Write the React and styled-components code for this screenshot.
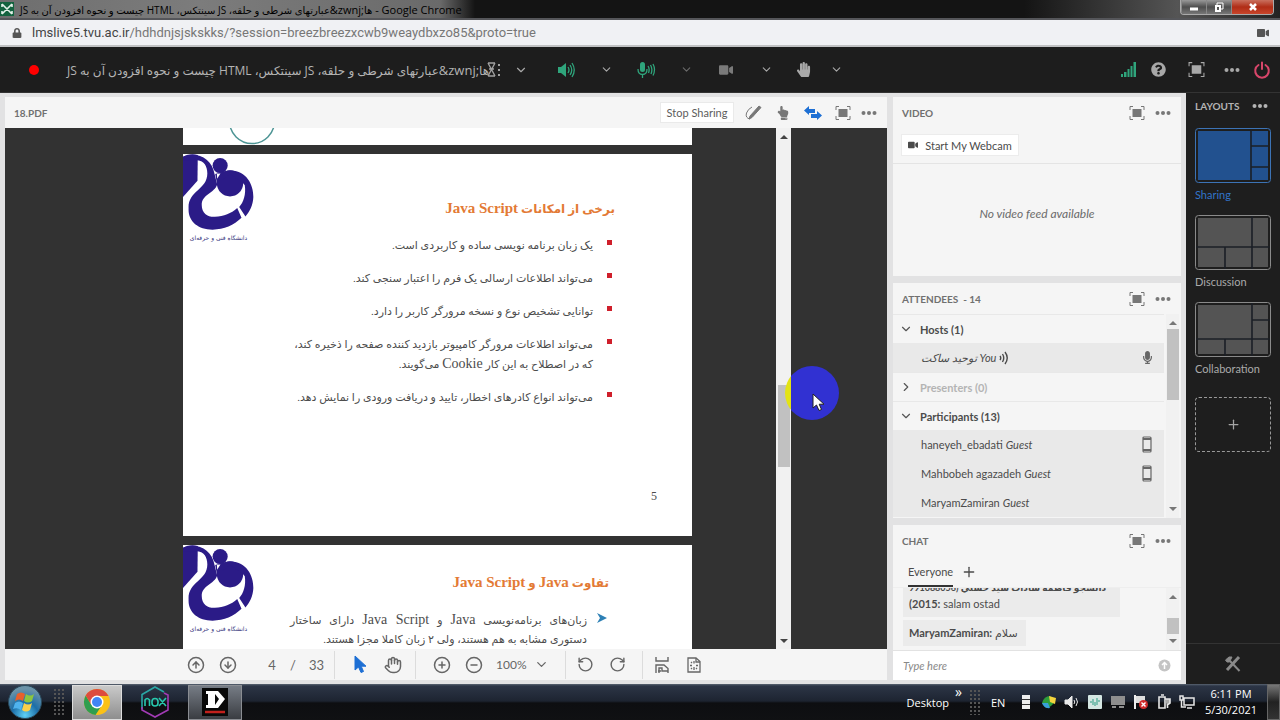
import React from 'react'
import styled, { createGlobalStyle, css } from 'styled-components'
import { FaVideo, FaHandPaper, FaHandPointUp, FaQuestionCircle, FaLock, FaMicrophone } from 'react-icons/fa'
import { LuChevronDown, LuChevronRight, LuHand, LuPlus, LuCirclePlus, LuCircleMinus, LuCircleArrowUp, LuCircleArrowDown, LuRotateCcw, LuRotateCw } from 'react-icons/lu'

const attendees = [
    { name: 'haneyeh_ebadati', phone: true },
    { name: 'Mahbobeh agazadeh', phone: true },
    { name: 'MaryamZamiran', phone: false },
]

const layouts = [
    { name: 'Sharing', active: true, lines: 'M56 1V54M56 18H75M56 39H75' },
    { name: 'Discussion', lines: 'M57 1V54M1 32H75M30 32V54' },
    { name: 'Collaboration', lines: 'M57 1V54M57 18H75M1 37H75M30 37V54' },
]

const SessionName = () => (
    <>
        <bdi dir="rtl">عبارتهای شرطی و حلقه، JS سینتکس، HTML چیست و نحوه افزودن آن به JS</bdi>
        &amp;zwnj;<bdi>ها</bdi>
    </>
)

const ScreenIcon = ({ size = 16 }) => (
    <svg width={size} height={size} viewBox="0 0 16 16" fill="none" stroke="currentColor">
        <path d="M4 1.5H1V5M12 1.5H15V5M4 14.5H1V11M12 14.5H15V11" />
        <rect x="3.5" y="4" width="9" height="8" fill="currentColor" stroke="none" />
    </svg>
)

const DotsIcon = () => (
    <svg width="16" height="6" viewBox="0 0 16 6" fill="currentColor">
        <circle cx="2.5" cy="3" r="2" />
        <circle cx="8" cy="3" r="2" />
        <circle cx="13.5" cy="3" r="2" />
    </svg>
)

const SpeakerIcon = ({ size = 18 }) => (
    <svg width={size} height={size} viewBox="0 0 18 18" fill="none" stroke="currentColor" strokeWidth="1.3">
        <path d="M1 6H4L9 2V16L4 12H1Z" fill="currentColor" stroke="none" />
        <path d="M11 6Q13 9 11 12M13 4Q16.5 9 13 14M15 2Q19.5 9 15 16" />
    </svg>
)

const MicWavesIcon = () => (
    <svg width="20" height="18" viewBox="0 0 20 18" fill="none" stroke="currentColor" strokeWidth="1.3">
        <rect x="4" y="1" width="5" height="10" rx="2.5" fill="currentColor" stroke="none" />
        <path d="M2 8Q2 13.5 6.5 13.5Q11 13.5 11 8M6.5 13V17M12 5Q14 8 12.5 12M14.5 4Q17 8 15 13M17 3Q20 8.5 17 14.5" />
    </svg>
)

const SignalIcon = () => (
    <svg width="17" height="17" viewBox="0 0 17 17" fill="currentColor">
        <path d="M1 13H3V16H1ZM4 11H6.5V16H4ZM7.5 8H9.5V16H7.5ZM10.5 5H12.5V16H10.5ZM13.5 1H16V16H13.5Z" />
    </svg>
)

const PowerIcon = () => (
    <svg width="18" height="18" viewBox="0 0 18 18" fill="none" stroke="currentColor" strokeWidth="2" strokeLinecap="round">
        <path d="M5.5 4A6.8 6.8 0 1 0 12.5 4M9 1.5V8" />
    </svg>
)

const GripIcon = () => (
    <svg width="18" height="18" viewBox="0 0 18 18" stroke="currentColor" fill="none">
        <path d="M1 2L8 15M8 2L1 15M1 2H8M2 8H7M1 15H8" strokeWidth="1.4" />
        <path d="M12 3V15" strokeWidth="2" strokeDasharray="2 3" />
    </svg>
)

const DrawIcon = () => (
    <svg width="17" height="17" viewBox="0 0 17 17" fill="none" stroke="currentColor">
        <path d="M5 12L14 2L16 3.5L7 13.5L4 15Z" fill="currentColor" />
        <path d="M5 15Q0 14 1.5 9Q3 5 7 3" />
    </svg>
)

const SyncIcon = () => (
    <svg width="18" height="14" viewBox="0 0 18 14" fill="currentColor">
        <path d="M0 4.5L5 0V3H11V7H5V9Z" />
        <path d="M18 9.5L13 5V8H7V12H13V14Z" />
    </svg>
)

const PointerIcon = ({ fill, stroke }) => (
    <svg width="14" height="19" viewBox="0 0 14 19" fill={fill} stroke={stroke}>
        <path d="M1 1V15L4.5 12L7 17.5L9.5 16.5L7.2 11.2H12Z" />
    </svg>
)

const FitWidthIcon = () => (
    <svg width="16" height="18" viewBox="0 0 16 18" fill="none" stroke="currentColor" strokeWidth="1.4">
        <path d="M2 1V5H14V1M2 17V9H10L14 12.5V17M5 17V12H8V15H14M4 15H7" />
    </svg>
)

const FitPageIcon = () => (
    <svg width="16" height="18" viewBox="0 0 16 18" fill="none" stroke="currentColor" strokeWidth="1.3">
        <path d="M2 2H10L14 5.5V16H2Z" />
        <path d="M10 2V6H14M8 5V7.5M8 11V14M4 9.5H6M10 9.5H12M5 6L6 7M5 13L6 12M11 13L10 12" />
    </svg>
)

const PhoneIcon = () => (
    <svg width="10" height="17" viewBox="0 0 10 17" fill="none" stroke="currentColor">
        <rect x="1" y="1" width="8" height="15" rx="1" strokeWidth="1.2" />
        <path d="M1 3H9M1 14H9" strokeWidth="1.8" />
    </svg>
)

const WavesIcon = () => (
    <svg width="10" height="14" viewBox="0 0 10 14" fill="none" stroke="currentColor" strokeWidth="1.4">
        <path d="M1 5Q2.5 7 1 9M3.5 3Q6 7 3.5 11M6 1Q10.5 7 6 13" />
    </svg>
)

const ToolsIcon = () => (
    <svg width="18" height="18" viewBox="0 0 18 18" fill="none" stroke="currentColor">
        <path d="M15 2L3 15" strokeWidth="3" />
        <path d="M6 6L15.5 16" strokeWidth="2" />
        <path d="M1.5 5L5 2H8L5.5 7L3 7Z" fill="currentColor" strokeWidth="1" />
    </svg>
)

const ArrowMark = ({ down }) => (
    <svg width="8" height="4" viewBox="0 0 8 4" fill="currentColor">
        <path d={down ? 'M0 0H8L4 4Z' : 'M0 4H8L4 0Z'} />
    </svg>
)

const UniversityLogo = () => (
    <svg width="71" height="77" viewBox="0 0 216 232" fill="#2b1b87">
        <path d="M0 7Q22 -4 45 2L44 80L0 130Z" />
        <path d="M0 7C40 -10 88 10 96 60L104 92C96 118 57 122 57 154C57 180 75 191 97 190C125 188 146 180 165 163L178 193C155 215 125 229 90 229C45 229 15 203 17 165C14 110 74 108 74 58C74 36 64 20 44 18L0 18Z" />
        <circle cx="113" cy="34" r="23" />
        <circle cx="143" cy="88" r="40" />
        <path d="M98 60Q118 52 140 49C190 45 215 90 214 130C213 155 203 174 190 189L171 160C184 146 192 122 188 94L183 88L143 60L104 92Z" />
        <path d="M103 59L114 58L104 74Z" fill="#fff" />
    </svg>
)

const ChromeLogo = () => (
    <svg width="28" height="28" viewBox="0 0 28 28">
        <circle cx="14" cy="14" r="13" fill="#fbc116" />
        <path d="M14 14L8.5 17L2.7 7.5A13 13 0 0 0 12.5 27L19 17Z" fill="#2f9e4f" />
        <path d="M14 8H25.5A13 13 0 0 0 2.7 7.5L8.5 17Z" fill="#dd4b3e" />
        <circle cx="14" cy="14" r="6.5" fill="#fff" />
        <circle cx="14" cy="14" r="5" fill="#4285f4" />
    </svg>
)

const WindowsOrb = () => (
    <svg width="36" height="34" viewBox="0 0 36 34">
        <defs>
            <radialGradient id="orb" cx="50%" cy="90%" r="80%">
                <stop offset="0" stopColor="#5fd0f5" />
                <stop offset="0.5" stopColor="#1c6ea8" />
                <stop offset="1" stopColor="#6c93a8" />
            </radialGradient>
        </defs>
        <circle cx="18" cy="17" r="16.5" fill="url(#orb)" stroke="#2a4a5c" />
        <path d="M10 9Q14 6 18 9L16 16Q12 13 8 16Z" fill="#e8602c" />
        <path d="M19 9Q23 12 27 9L25 16Q21 19 17 16Z" fill="#8cc63f" />
        <path d="M8 18Q12 15 16 18L14 25Q10 22 6 24Z" fill="#4fb3ee" />
        <path d="M17 18Q21 21 25 18L23 25Q19 28 15 25Z" fill="#fbd04a" />
    </svg>
)

const NoxLogo = () => (
    <svg width="30" height="32" viewBox="0 0 30 32" fill="none" strokeWidth="1.6">
        <path d="M24 6L15 1L2 8.5V23" stroke="#2aa7a5" />
        <path d="M2 21V24L15 31L28 24V9L24 7" stroke="#a23bb5" />
        <path d="M5 20V14Q7 11 9.5 14V20M12 15.5A3 3 0 0 1 18 15.5V17A3 3 0 0 1 12 17ZM19 12L26 20M26 12L19 20" stroke="#28c8ae" />
    </svg>
)

const DLogo = () => (
    <svg width="26" height="28" viewBox="0 0 26 28">
        <rect width="26" height="28" fill="#090909" />
        <path d="M4 3H16L23 11L16 20H4V17H6V6H4ZM13 6V17L17 11Z" fill="#fff" fillRule="evenodd" />
        <path d="M3 24H23" stroke="#c2201c" strokeWidth="2.5" />
    </svg>
)

const TrayIcons = () => (
    <Tray>
        <svg viewBox="0 0 16 16"><path d="M4 1H12V5H4ZM4 6H12V10H4ZM4 11H12V15H4Z" fill="#eee" /><path d="M4 5.5H12M4 10.5H12" stroke="#333" /></svg>
        <svg viewBox="0 0 16 16"><path d="M1 9Q3 2 9 2L14 7Q10 14 5 14Z" fill="#2e9d3a" /><path d="M8 2L15 4L14 10L9 8Z" fill="#f3d33d" /><path d="M1 9L7 9L9 14Q3 15 1 9Z" fill="#38a0d8" /></svg>
        <svg viewBox="0 0 16 16" fill="none" stroke="#e8e8e8"><path d="M1 6H4L8 2V14L4 10H1Z" fill="#e8e8e8" /><path d="M10 6Q11.5 8 10 10M12 4Q15 8 12 12" /></svg>
        <svg viewBox="0 0 16 16"><rect x="1" y="1" width="14" height="14" rx="1" fill="#d4e6e2" /><path d="M4 9V7M6 11V5M8 12V8M10 11V4M12 8V6" stroke="#2b9b82" /></svg>
        <svg viewBox="0 0 16 16"><path d="M1 2H15V11H1Z" fill="#8e8e8e" /><path d="M2 13H6M9 13H14" stroke="#8e8e8e" strokeWidth="2" /></svg>
        <svg viewBox="0 0 16 16"><path d="M2 1V15" stroke="#eee" strokeWidth="2" /><path d="M3 2H12V9H3Z" fill="#ddd" /><circle cx="10.5" cy="10.5" r="4.5" fill="#cf2b2b" /><path d="M8.5 8.5L12.5 12.5M12.5 8.5L8.5 12.5" stroke="#fff" strokeWidth="1.4" /></svg>
        <svg viewBox="0 0 16 16" fill="none" stroke="#e6e6e6" strokeWidth="1.6"><path d="M3 3H9V14H3ZM5 1H8" /><path d="M9 5H14V9L11.5 11V14" fill="#aaa" /></svg>
        <svg viewBox="0 0 16 16" fill="none" stroke="#e6e6e6" strokeWidth="1.5"><path d="M5 4H15V11H5ZM1 2H4V6H1ZM2.5 6V13H7M8 14H13" /></svg>
    </Tray>
)

const PodHeader = ({ title, children }) => (
    <Head>
        <PodTitle>{title}</PodTitle>
        {children}
        <IconButton aria-label="Full screen"><ScreenIcon /></IconButton>
        <IconButton aria-label="More options"><DotsIcon /></IconButton>
    </Head>
)

const App = () => (
    <Page>
        <GlobalStyle />
        <TitleBar>
            <Favicon viewBox="0 0 14 14">
                <rect width="14" height="14" fill="#14633f" />
                <path d="M2 2L12 12M12 2L2 12M2 2V5M12 2V5M2 9V12M12 9V12" stroke="#e4f2ea" strokeWidth="1.6" />
            </Favicon>
            <WindowTitle><SessionName /> - Google Chrome</WindowTitle>
            <WindowButtons>
                <WindowButton aria-label="Minimize"><svg width="10" height="10"><path d="M1 7H9" stroke="#fff" strokeWidth="3" /></svg></WindowButton>
                <WindowButton aria-label="Restore"><svg width="10" height="10" fill="none" stroke="#fff"><path d="M3 3V1H9V7H7" /><path d="M2 4H6V9H2Z" strokeWidth="2" /></svg></WindowButton>
                <WindowButton aria-label="Close" $close><svg width="10" height="10"><path d="M2 2L8 8M8 2L2 8" stroke="#fff" strokeWidth="2.5" /></svg></WindowButton>
            </WindowButtons>
        </TitleBar>
        <AddressBar>
            <FaLock size={10} />
            <Url><span>lmslive5.tvu.ac.ir</span>/hdhdnjsjskskks/?session=breezbreezxcwb9weaydbxzo85&amp;proto=true</Url>
            <FaVideo size={12} />
        </AddressBar>
        <MeetingBar>
            <RecordDot />
            <MeetingTitle><SessionName /></MeetingTitle>
            <GripIcon />
            <BarButton $width={32} aria-label="Meeting menu"><LuChevronDown size={14} /></BarButton>
            <Controls>
                <BarButton $color="#2fa57c" aria-label="Speaker"><SpeakerIcon /></BarButton>
                <BarButton aria-label="Speaker options"><LuChevronDown size={13} /></BarButton>
                <BarButton $color="#2fa57c" aria-label="Microphone"><MicWavesIcon /></BarButton>
                <BarButton $color="#6a6a6a" aria-label="Microphone options"><LuChevronDown size={13} /></BarButton>
                <BarButton $color="#7a7a7a" aria-label="Camera"><FaVideo size={14} /></BarButton>
                <BarButton aria-label="Camera options"><LuChevronDown size={13} /></BarButton>
                <BarButton $width={34} aria-label="Raise hand"><FaHandPaper size={15} /></BarButton>
                <BarButton $width={32} aria-label="Status options"><LuChevronDown size={13} /></BarButton>
            </Controls>
            <BarButton $width={32} $color="#2fa57c" aria-label="Connection"><SignalIcon /></BarButton>
            <BarButton $width={28} aria-label="Help"><FaQuestionCircle size={15} /></BarButton>
            <BarButton $width={48} aria-label="Full screen"><ScreenIcon size={17} /></BarButton>
            <BarButton $width={24} aria-label="More"><DotsIcon /></BarButton>
            <BarButton $width={36} $color="#d8466a" aria-label="End meeting"><PowerIcon /></BarButton>
        </MeetingBar>
        <Body>
            <Pods>
                <SharePod>
                    <PodHeader title="18.PDF">
                        <StopButton>Stop Sharing</StopButton>
                        <ShareTools>
                            <IconButton aria-label="Draw"><DrawIcon /></IconButton>
                            <IconButton aria-label="Pointer"><FaHandPointUp size={14} /></IconButton>
                            <IconButton $active aria-label="Sync"><SyncIcon /></IconButton>
                        </ShareTools>
                    </PodHeader>
                    <Viewer>
                        <Slides>
                            <Slide $height={17}>
                                <Arc viewBox="0 0 48 17"><circle cx="24" cy="-7" r="22.5" fill="none" stroke="#4e9595" strokeWidth="1.5" /></Arc>
                            </Slide>
                            <Slide $height={382}>
                                <LogoBox><UniversityLogo /><LogoText>دانشگاه فنی و حرفه‌ای</LogoText></LogoBox>
                                <SlideBody>
                                    <SlideHeading>برخی از امکانات <Latin $large>Java Script</Latin></SlideHeading>
                                    <Bullets>
                                        <li>یک زبان برنامه نویسی ساده و کاربردی است.</li>
                                        <li>می‌تواند اطلاعات ارسالی یک فرم را اعتبار سنجی کند.</li>
                                        <li>توانایی تشخیص نوع و نسخه مرورگر کاربر را دارد.</li>
                                        <li>می‌تواند اطلاعات مرورگر کامپیوتر بازدید کننده صفحه را ذخیره کند،<br />که در اصطلاح به این کار <Latin>Cookie</Latin> می‌گویند.</li>
                                        <li>می‌تواند انواع کادرهای اخطار، تایید و دریافت ورودی را نمایش دهد.</li>
                                    </Bullets>
                                    <SlideNumber>5</SlideNumber>
                                </SlideBody>
                            </Slide>
                            <Slide>
                                <LogoBox><UniversityLogo /><LogoText>دانشگاه فنی و حرفه‌ای</LogoText></LogoBox>
                                <SlideBody $second>
                                    <SlideHeading>تفاوت <Latin $large>Java</Latin> و <Latin $large>Java Script</Latin></SlideHeading>
                                    <Bullets $arrow>
                                        <li>
                                            <svg width="12" height="12" viewBox="0 0 12 12"><path d="M1 1L11 6L1 11L4 6Z" fill="#2d80b5" /></svg>
                                            زبان‌های برنامه‌نویسی <Latin>Java</Latin> و <Latin>Java Script</Latin> دارای ساختار دستوری مشابه به هم هستند، ولی ۲ زبان کاملا مجزا هستند.
                                        </li>
                                    </Bullets>
                                </SlideBody>
                            </Slide>
                        </Slides>
                        <ViewerScroll>
                            <Halo $color="#e3e315" $left={9} />
                            <ArrowMark />
                            <ViewerThumb />
                            <ArrowMark down />
                        </ViewerScroll>
                        <Gutter>
                            <Halo $color="#3131d2" $left={-6} />
                            <Cursor><PointerIcon fill="#fff" stroke="#222" /></Cursor>
                        </Gutter>
                    </Viewer>
                    <DocBar>
                        <DocButton aria-label="Previous page"><LuCircleArrowUp size={18} /></DocButton>
                        <DocButton aria-label="Next page"><LuCircleArrowDown size={18} /></DocButton>
                        <PageInput aria-label="Page" defaultValue="4" />
                        <PageTotal><span>/</span><span>33</span></PageTotal>
                        <DocGroup>
                            <DocButton aria-label="Select"><PointerIcon fill="#1d6fd4" stroke="#1d6fd4" /></DocButton>
                            <DocButton aria-label="Pan"><LuHand size={18} /></DocButton>
                        </DocGroup>
                        <DocGroup>
                            <DocButton aria-label="Zoom in"><LuCirclePlus size={18} /></DocButton>
                            <DocButton aria-label="Zoom out"><LuCircleMinus size={18} /></DocButton>
                            <ZoomLabel>
                                <ZoomSelect aria-label="Zoom" defaultValue="100%"><option>100%</option><option>150%</option></ZoomSelect>
                                <LuChevronDown size={15} />
                            </ZoomLabel>
                        </DocGroup>
                        <DocGroup $tight>
                            <DocButton aria-label="Rotate left"><LuRotateCcw size={17} /></DocButton>
                            <DocButton aria-label="Rotate right"><LuRotateCw size={17} /></DocButton>
                        </DocGroup>
                        <DocGroup $tight>
                            <DocButton aria-label="Fit width"><FitWidthIcon /></DocButton>
                            <DocButton aria-label="Fit page"><FitPageIcon /></DocButton>
                        </DocGroup>
                    </DocBar>
                </SharePod>
                <SideColumn>
                    <Pod $height={179}>
                        <PodHeader title="VIDEO" />
                        <WebcamRow><WebcamButton><FaVideo size={10} />Start My Webcam</WebcamButton></WebcamRow>
                        <NoFeed>No video feed available</NoFeed>
                    </Pod>
                    <Pod $height={235}>
                        <PodHeader title="ATTENDEES &nbsp;- 14" />
                        <Scrollable>
                            <AttendeeList>
                                <GroupRow><LuChevronDown size={14} />Hosts (1)</GroupRow>
                                <Person><bdi><i>توحید ساکت</i></bdi><i>You</i><WavesIcon /><End><FaMicrophone size={13} /></End></Person>
                                <GroupRow $empty><LuChevronRight size={14} />Presenters (0)</GroupRow>
                                <GroupRow><LuChevronDown size={14} />Participants (13)</GroupRow>
                                {attendees.map(person => (
                                    <Person key={person.name}>
                                        {person.name}<i>Guest</i>
                                        {person.phone && <End><PhoneIcon /></End>}
                                    </Person>
                                ))}
                            </AttendeeList>
                            <PodScroll><ArrowMark /><PodThumb $height={71} /><ArrowMark down /></PodScroll>
                        </Scrollable>
                    </Pod>
                    <Pod $last>
                        <PodHeader title="CHAT" />
                        <Tabs><Tab>Everyone</Tab><AddTab aria-label="New chat"><LuPlus size={16} /></AddTab></Tabs>
                        <Scrollable>
                            <Messages>
                                <Message $wide><b><bdi dir="rtl">دانشجو فاطمه سادات سيد حسني (991088056</bdi><br />(2015:</b> salam ostad</Message>
                                <Message><b>MaryamZamiran:</b> سلام</Message>
                            </Messages>
                            <PodScroll><ArrowMark /><PodThumb $low $height={16} /><ArrowMark down /></PodScroll>
                        </Scrollable>
                        <ChatForm>
                            <ChatInput aria-label="Message" placeholder="Type here" />
                            <SendButton aria-label="Send">
                                <svg width="13" height="13" viewBox="0 0 13 13"><circle cx="6.5" cy="6.5" r="6" fill="#c4c4c4" /><path d="M6.5 10V4M4 6L6.5 3.5L9 6" stroke="#fff" fill="none" strokeWidth="1.5" /></svg>
                            </SendButton>
                        </ChatForm>
                    </Pod>
                </SideColumn>
            </Pods>
            <LayoutBar>
                <LayoutHead>LAYOUTS<DotsIcon /></LayoutHead>
                {layouts.map(item => (
                    <LayoutItem key={item.name} $active={item.active}>
                        <svg width="76" height="55" viewBox="0 0 76 55">
                            <rect x="0.5" y="0.5" width="75" height="54" rx="3" fill="#1e1e1e" stroke={item.active ? '#3c73b5' : '#8a8a8a'} />
                            <rect x="3" y="3" width="70" height="49" fill={item.active ? '#22518f' : '#545454'} />
                            <path d={item.lines} stroke="#1b1f26" strokeWidth="1.6" />
                        </svg>
                        {item.name}
                    </LayoutItem>
                ))}
                <AddLayout aria-label="Add layout"><LuPlus size={15} /></AddLayout>
                <LayoutFoot><ToolsIcon /></LayoutFoot>
            </LayoutBar>
        </Body>
        <Taskbar>
            <StartButton aria-label="Start"><WindowsOrb /></StartButton>
            <DotGrip />
            <TaskButton $tone="bright" aria-label="Chrome"><ChromeLogo /></TaskButton>
            <TaskButton aria-label="Nox"><NoxLogo /></TaskButton>
            <TaskButton $tone="dim" aria-label="D"><DLogo /></TaskButton>
            <DesktopLabel>Desktop</DesktopLabel>
            <More>»</More>
            <DotGrip $small />
            <Language>EN</Language>
            <TrayIcons />
            <Clock><span>6:11 PM</span><span>5/30/2021</span></Clock>
            <ShowDesktop aria-label="Show desktop" />
        </Taskbar>
    </Page>
)

export default App

const GlobalStyle = createGlobalStyle`
    * {
        box-sizing: border-box;
    }
    body {
        margin: 0;
        font-family: Lato, "DejaVu Sans", sans-serif;
        font-size: 11px;
        color: #4b4b4b;
    }
    button {
        font: inherit;
        color: inherit;
        background: none;
        border: 0;
        padding: 0;
    }
    svg {
        flex-shrink: 0;
        display: block;
    }
`
const center = css`
    display: flex;
    align-items: center;
    justify-content: center;
`
const Page = styled.div`
    display: flex;
    flex-direction: column;
    height: 100vh;
    min-height: 600px;
    overflow: hidden;
`
const TitleBar = styled.header`
    display: flex;
    align-items: center;
    height: 20px;
    flex-shrink: 0;
    background: linear-gradient(90deg, #6e6e6e 0, #7c7c7c 200px, #6a6a6a 440px, #141414 475px, #141414 80%, #555 92%, #222 100%);
    border-bottom: 2px solid #55565a;
`
const Favicon = styled.svg`
    width: 14px;
    height: 14px;
    margin-right: 6px;
`
const WindowTitle = styled.div`
    flex: 1;
    font-family: "Open Sans", "DejaVu Sans", sans-serif;
    font-size: 11px;
    color: #000;
    white-space: nowrap;
    bdi {
        font-size: 10px;
    }
`
const WindowButtons = styled.div`
    display: flex;
    align-self: flex-start;
    height: 15px;
    margin-right: 6px;
    border: 1px solid #aaa;
    border-top: 0;
    border-radius: 0 0 4px 4px;
    overflow: hidden;
`
const WindowButton = styled.button`
    ${center}
    width: ${props => props.$close ? '42px' : '25px'};
    background: ${props => props.$close ? 'linear-gradient(#c9705e, #b02d16 50%, #c8452b)' : 'linear-gradient(#999, #4d4d4d 50%, #777)'};
    border-left: 1px solid #888;
`
const AddressBar = styled.div`
    display: flex;
    align-items: center;
    height: 27px;
    flex-shrink: 0;
    padding: 0 11px 0 12px;
    background: #f0f1f4;
    border-bottom: 2px solid #c0c1c3;
    color: #555;
`
const Url = styled.div`
    flex: 1;
    padding-left: 10px;
    font-family: Roboto, sans-serif;
    font-size: 13px;
    color: #777;
    span {
        color: #444;
    }
`
const MeetingBar = styled.div`
    display: flex;
    align-items: center;
    height: 46px;
    flex-shrink: 0;
    background: #1d1d1d;
    border-bottom: 1px solid #333;
    color: #a0a0a0;
`
const RecordDot = styled.div`
    width: 10px;
    height: 10px;
    margin: 0 28px 0 29px;
    border-radius: 50%;
    background: #f00;
`
const MeetingTitle = styled.h1`
    width: 420px;
    margin: 0;
    font-family: "Open Sans", "DejaVu Sans", sans-serif;
    font-size: 13px;
    font-weight: 400;
    color: #b4b4b4;
    white-space: nowrap;
    bdi {
        font-size: 12px;
    }
`
const Controls = styled.div`
    display: flex;
    flex: 1;
    padding-left: 9px;
`
const BarButton = styled.button`
    ${center}
    width: ${props => props.$width || 40}px;
    color: ${props => props.$color || '#a8a8a8'};
`
const Body = styled.main`
    display: flex;
    flex: 1;
    min-height: 0;
`
const Pods = styled.div`
    display: flex;
    flex: 1;
    gap: 6px;
    min-width: 0;
    padding: 4px 5px;
    background: #e2e2e3;
`
const SharePod = styled.section`
    display: flex;
    flex: 1;
    flex-direction: column;
    min-width: 0;
    background: #f5f5f5;
`
const SideColumn = styled.div`
    display: flex;
    flex-direction: column;
    width: 288px;
    gap: 7px;
`
const Pod = styled.section`
    display: flex;
    flex-direction: column;
    ${props => props.$last ? 'flex: 1;' : `height: ${props.$height}px; flex-shrink: 0;`}
    min-height: 0;
    background: #f5f5f5;
`
const Head = styled.header`
    display: flex;
    align-items: center;
    height: 31px;
    flex-shrink: 0;
    padding: 0 5px 0 9px;
    color: #6e6e6e;
`
const PodTitle = styled.h2`
    flex: 1;
    margin: 0;
    font-size: 10px;
    font-weight: 700;
    color: #707070;
`
const IconButton = styled.button`
    ${center}
    width: 26px;
    height: 24px;
    color: ${props => props.$active ? '#1d6fd4' : '#777'};
`
const StopButton = styled.button`
    width: 74px;
    height: 21px;
    margin-right: 6px;
    background: #fff;
    border: 1px solid #eaeaea;
    color: #5c5c5c;
`
const ShareTools = styled.div`
    display: flex;
    gap: 4px;
    padding-right: 4px;
`
const Viewer = styled.div`
    display: flex;
    flex: 1;
    min-height: 0;
    background: #323232;
`
const Slides = styled.div`
    display: flex;
    flex: 1;
    flex-direction: column;
    gap: 9px;
    min-width: 0;
    padding: 0 84px 0 178px;
    overflow: hidden;
`
const Slide = styled.article`
    display: flex;
    ${props => props.$height ? `flex: 0 0 ${props.$height}px;` : 'flex: 1 1 0;'}
    min-height: 0;
    overflow: hidden;
    background: #fff;
`
const Arc = styled.svg`
    width: 48px;
    height: 17px;
    margin-left: 45px;
`
const LogoBox = styled.div`
    width: 71px;
    flex-shrink: 0;
`
const LogoText = styled.div`
    direction: rtl;
    text-align: center;
    font-family: "DejaVu Sans", sans-serif;
    font-size: 6px;
    line-height: 14px;
    white-space: nowrap;
    color: #35347c;
`
const SlideBody = styled.div`
    display: flex;
    flex: 1;
    flex-direction: column;
    direction: rtl;
    padding: ${props => props.$second ? '25px 83px 0 36px' : '42px 77px 32px 0'};
    font-family: "Liberation Serif", "DejaVu Sans", serif;
    font-size: 11px;
    color: #4c4c4c;
`
const SlideHeading = styled.h3`
    margin: 0 0 15px;
    font-size: 12px;
    line-height: 24px;
    color: #e37a35;
`
const Latin = styled.bdi`
    font-size: ${props => props.$large ? '15px' : '14px'};
`
const Bullets = styled.ul`
    display: flex;
    flex-direction: column;
    gap: 14px;
    margin: 0;
    padding: 0 22px 0 0;
    list-style: none;
    line-height: 19px;
    ${props => props.$arrow && 'text-align: justify;'}
    li {
        position: relative;
    }
    li::before {
        content: '';
        position: absolute;
        top: 4px;
        right: -19px;
        width: 5px;
        height: 5px;
        background: ${props => props.$arrow ? 'none' : '#cf1f2b'};
    }
    svg {
        position: absolute;
        top: 2px;
        right: -21px;
    }
`
const SlideNumber = styled.div`
    direction: ltr;
    margin: auto -44px 0 0;
    padding-right: 2px;
    text-align: right;
    font-size: 12px;
`
const ViewerScroll = styled.div`
    position: relative;
    display: flex;
    flex-direction: column;
    align-items: center;
    width: 15px;
    padding: 7px 0 6px;
    overflow: hidden;
    background: #f1f1f1;
    color: #444;
`
const ViewerThumb = styled.div`
    width: 12px;
    height: 82px;
    margin: 246px 0 auto;
    background: #c1c1c1;
`
const Gutter = styled.div`
    position: relative;
    width: 96px;
    overflow: hidden;
`
const Halo = styled.div`
    position: absolute;
    top: 238px;
    left: ${props => props.$left}px;
    width: 54px;
    height: 54px;
    border-radius: 50%;
    background: ${props => props.$color};
`
const Cursor = styled.div`
    position: absolute;
    top: 265px;
    left: 21px;
`
const DocBar = styled.div`
    display: flex;
    align-items: center;
    height: 31px;
    flex-shrink: 0;
    padding-left: 175px;
    color: #666;
    font-size: 13px;
`
const DocButton = styled.button`
    ${center}
    width: 32px;
    height: 28px;
`
const PageInput = styled.input`
    width: 24px;
    margin-left: 16px;
    padding: 0;
    border: 0;
    background: none;
    font: inherit;
    color: inherit;
    text-align: center;
`
const PageTotal = styled.div`
    display: flex;
    gap: 13px;
    width: 50px;
    padding-left: 6px;
`
const DocGroup = styled.div`
    display: flex;
    padding: ${props => props.$tight ? '0 9px 0 3px' : '0 6px 0 10px'};
    border-left: 1px solid #dcdcdc;
`
const ZoomLabel = styled.label`
    display: flex;
    align-items: center;
    padding: 0 10px 0 6px;
`
const ZoomSelect = styled.select`
    appearance: none;
    width: 38px;
    padding: 0;
    border: 0;
    background: none;
    font: inherit;
    font-size: 12px;
    color: inherit;
`
const WebcamRow = styled.div`
    height: 36px;
    padding: 6px 8px;
    border-bottom: 1px solid #e4e4e4;
`
const WebcamButton = styled.button`
    ${center}
    gap: 7px;
    width: 118px;
    height: 22px;
    background: #fff;
    border: 1px solid #ececec;
`
const NoFeed = styled.p`
    ${center}
    flex: 1;
    margin: 0;
    padding-bottom: 13px;
    font-size: 12px;
    font-style: italic;
    color: #6a6a6a;
`
const Scrollable = styled.div`
    display: flex;
    flex: 1;
    min-height: 0;
    padding-right: 2px;
`
const AttendeeList = styled.div`
    flex: 1;
    margin-right: 2px;
    overflow: hidden;
`
const GroupRow = styled.div`
    display: flex;
    align-items: center;
    gap: 7px;
    height: 29px;
    padding-left: 6px;
    border-top: 1px solid #e8e8e8;
    font-weight: 700;
    color: ${props => props.$empty ? '#b4b4b4' : '#4b4b4b'};
    svg {
        color: #555;
    }
`
const Person = styled.div`
    display: flex;
    align-items: center;
    gap: 3px;
    height: 29px;
    padding: 0 10px 0 28px;
    background: #e9e9e9;
`
const End = styled.span`
    ${center}
    width: 14px;
    margin-left: auto;
    color: #666;
`
const PodScroll = styled.div`
    display: flex;
    flex-direction: column;
    align-items: center;
    width: 13px;
    padding: 7px 0;
    background: #f1f1f1;
    color: #777;
`
const PodThumb = styled.div`
    width: 12px;
    height: ${props => props.$height}px;
    margin: ${props => props.$low ? 'auto 0 5px' : '4px 0 auto'};
    background: #c1c1c1;
`
const Tabs = styled.div`
    display: flex;
    align-items: flex-end;
    gap: 8px;
    height: 32px;
    padding: 0 15px;
    border-bottom: 1px solid #eee;
`
const Tab = styled.button`
    height: 30px;
    border-bottom: 2px solid #333;
`
const AddTab = styled.button`
    height: 31px;
`
const Messages = styled.div`
    display: flex;
    flex: 1;
    flex-direction: column;
    align-items: flex-start;
    justify-content: flex-end;
    gap: 3px;
    padding: 0 0 4px 10px;
    overflow: hidden;
`
const Message = styled.div`
    width: ${props => props.$wide ? '217px' : 'auto'};
    flex-shrink: 0;
    padding: 5px 8px 5px 6px;
    background: #ebebeb;
    line-height: 16px;
    white-space: nowrap;
    bdi {
        font-size: 9px;
    }
`
const ChatForm = styled.form`
    display: flex;
    align-items: center;
    height: 30px;
    flex-shrink: 0;
    padding: 0 10px;
    background: #fff;
    border-top: 1px solid #e2e2e2;
`
const ChatInput = styled.input`
    flex: 1;
    border: 0;
    padding: 0;
    background: none;
    font: italic 11px Lato, sans-serif;
    &::placeholder {
        color: #888;
    }
`
const SendButton = styled.button`
    ${center}
`
const LayoutBar = styled.aside`
    display: flex;
    flex-direction: column;
    width: 94px;
    background: #1e1e1e;
    color: #a5a5a5;
`
const LayoutHead = styled.h2`
    display: flex;
    align-items: center;
    justify-content: space-between;
    height: 26px;
    margin: 0 12px 9px 9px;
    font-size: 10px;
    color: #b4b4b4;
`
const LayoutItem = styled.button`
    display: block;
    height: 79px;
    margin-bottom: 8px;
    padding-left: 9px;
    text-align: left;
    line-height: 24px;
    color: ${props => props.$active ? '#3274c9' : '#aaa'};
`
const AddLayout = styled.button`
    ${center}
    height: 55px;
    margin: 8px 9px 0;
    border: 1px dashed #999;
    border-radius: 4px;
`
const LayoutFoot = styled.div`
    ${center}
    height: 41px;
    margin-top: auto;
    border-top: 1px solid #333;
    color: #8a8a8a;
`
const Taskbar = styled.footer`
    display: flex;
    align-items: center;
    height: 36px;
    flex-shrink: 0;
    background: linear-gradient(#5a6472 0, #2c3546 2px, #1d2431 17px, #0d0e11 19px, #101113 100%);
    font-family: "Open Sans", sans-serif;
    color: #fff;
`
const StartButton = styled.button`
    margin: 0 10px 0 7px;
`
const DotGrip = styled.div`
    width: 11px;
    height: ${props => props.$small ? '26px' : '28px'};
    margin-right: ${props => props.$small ? '11px' : '8px'};
    background: radial-gradient(#555 1px, transparent 1px) 0 0 / 4px 4px;
`
const TaskButton = styled.button`
    ${center}
    width: ${props => props.$tone === 'bright' ? '50px' : props.$tone ? '54px' : '66px'};
    height: 35px;
    ${props => props.$tone === 'bright' && 'background: linear-gradient(#c9c9c9, #8e8e8e); border: 1px solid #ddd;'}
    ${props => props.$tone === 'dim' && 'background: linear-gradient(#767c85, #3a3d42); border: 1px solid #8a8d92;'}
`
const DesktopLabel = styled.span`
    margin-left: auto;
`
const More = styled.span`
    width: 20px;
    padding-left: 6px;
    align-self: flex-start;
    font-size: 14px;
    line-height: 16px;
`
const Language = styled.span`
    width: 27px;
`
const Tray = styled.div`
    display: flex;
    gap: 7px;
    svg {
        width: 16px;
        height: 16px;
    }
`
const Clock = styled.time`
    display: flex;
    flex-direction: column;
    align-items: center;
    width: 72px;
    line-height: 16px;
`
const ShowDesktop = styled.button`
    align-self: stretch;
    width: 13px;
    background: linear-gradient(#777, #222 50%, #333);
    border: 1px solid #666;
`
